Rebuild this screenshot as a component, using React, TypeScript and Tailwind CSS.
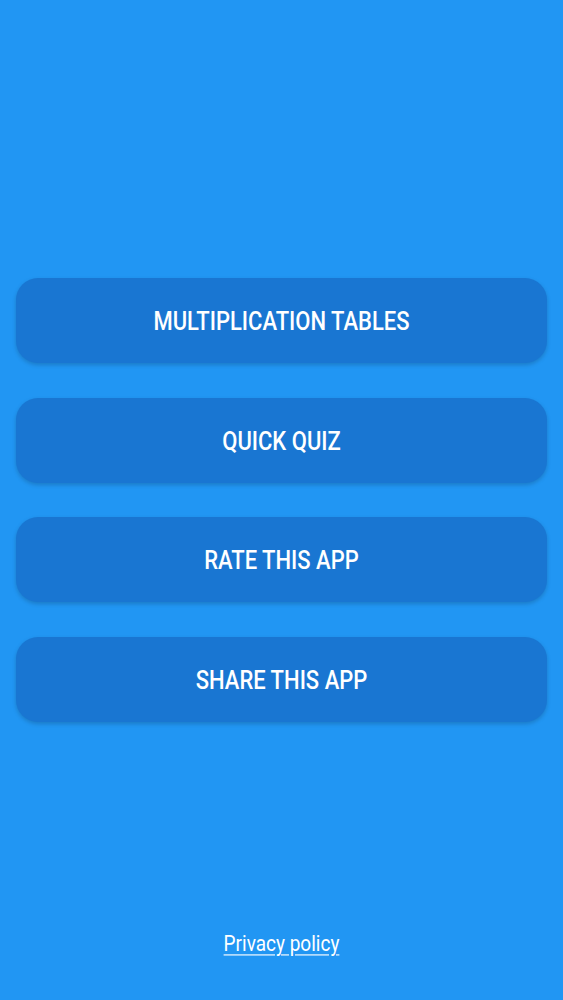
const items = ['MULTIPLICATION TABLES', 'QUICK QUIZ', 'RATE THIS APP', 'SHARE THIS APP'];

export default function App() {
  return (
    <div
      className="flex flex-col h-[1000px] bg-[#2196F3] px-4 pt-[278px] pb-[44px]"
      style={{ fontFamily: 'Roboto, "Noto Sans", sans-serif' }}
    >
      <div className="flex flex-col gap-[34.6px]">
        {items.map((label) => (
          <button
            key={label}
            className="h-[85px] w-full rounded-[22px] bg-[#1976D2] text-white text-[22px] font-medium shadow-[0_2px_4px_rgba(0,0,0,0.18)]"
          >
            <span className="inline-block translate-y-[1px] scale-y-[1.15]">{label}</span>
          </button>
        ))}
      </div>
      <div className="mt-auto flex justify-center">
        <a className="inline-block scale-y-[1.15] text-white text-[19px] font-normal underline underline-offset-[3px] leading-[24px]">
          Privacy policy
        </a>
      </div>
    </div>
  );
}
